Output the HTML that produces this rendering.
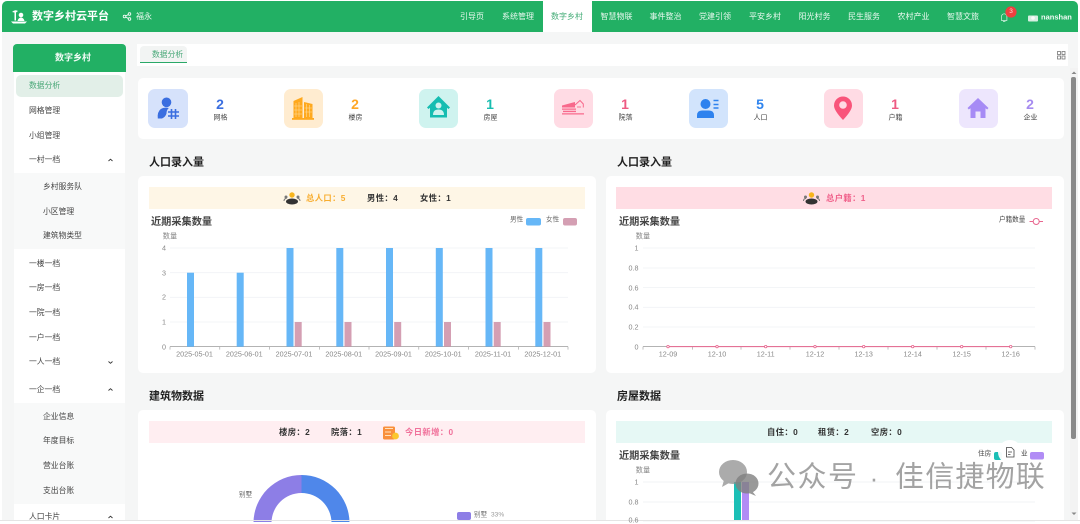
<!DOCTYPE html>
<html lang="zh-CN"><head><meta charset="utf-8"><title>数字乡村云平台</title>
<style>
html,body{margin:0;padding:0;background:#fff}
body{position:relative;width:1080px;height:522px;overflow:hidden;font-family:"Liberation Sans","Noto Sans CJK SC",sans-serif;color:#333;filter:blur(.3px)}
.p{position:absolute}
.c,.l,.r{position:absolute;white-space:nowrap;line-height:1}
.c{transform:translate(-50%,-50%)}
.l{transform:translateY(-50%)}
.r{transform:translate(-100%,-50%)}
.nav{font-size:8px;color:#e9f8ef;top:16.5px}
.side{font-size:7.8px;color:#444;left:29px}
.sub{font-size:7.8px;color:#444;left:43px}
.num{font-size:14px;font-weight:700;top:103.5px}
.lab{font-size:7px;color:#444;top:118px}
.sec{font-size:11px;font-weight:700;color:#222;left:149px}
.cap{font-size:10.2px;font-weight:700;color:#444}
.ban{font-size:8.3px;font-weight:700;color:#333;letter-spacing:.4px}
.ax{font-size:7.2px;color:#888}
.leg{font-size:6.6px;color:#666}
</style></head><body>

<div class="p" style="left:2px;top:1px;width:1076px;height:519px;background:#f5f6f6;border-radius:5px 5px 0 0"></div>
<div class="p" style="left:2px;top:1px;width:1076px;height:31px;background:#22b064;border-radius:5px 5px 0 0"></div>
<div class="p" style="left:543px;top:1px;width:49px;height:31px;background:#fff"></div>

<div class="p" style="left:14px;top:72px;width:111px;height:448px;background:#fff"></div>
<div class="p" style="left:13px;top:44px;width:113px;height:28px;background:#22b064;border-radius:4px 4px 0 0"></div>
<div class="p" style="left:16px;top:75px;width:107px;height:22px;background:#e2efe8;border-radius:5px"></div>
<div class="p" style="left:14px;top:173px;width:111px;height:76px;background:#f8f9f9"></div>
<div class="p" style="left:14px;top:403px;width:111px;height:101px;background:#f8f9f9"></div>

<div class="p" style="left:137px;top:44px;width:931px;height:22px;background:#fff"></div>
<div class="p" style="left:140px;top:46px;width:47px;height:16px;background:#f2f4f3;border-radius:4px 4px 0 0;border-bottom:1px solid #2aa868"></div>

<div class="p" style="left:138px;top:78px;width:926px;height:61px;background:#fff;border-radius:5px"></div>
<div class="p" style="left:138px;top:176px;width:458px;height:197px;background:#fff;border-radius:5px"></div>
<div class="p" style="left:606px;top:176px;width:458px;height:197px;background:#fff;border-radius:5px"></div>
<div class="p" style="left:138px;top:410px;width:458px;height:110px;background:#fff;border-radius:5px 5px 0 0"></div>
<div class="p" style="left:606px;top:410px;width:458px;height:110px;background:#fff;border-radius:5px 5px 0 0"></div>

<div class="p" style="left:149px;top:187px;width:436px;height:22px;background:#fef6e6"></div>
<div class="p" style="left:616px;top:187px;width:436px;height:22px;background:#ffdde4"></div>
<div class="p" style="left:149px;top:421px;width:436px;height:22px;background:#ffeef1"></div>
<div class="p" style="left:616px;top:421px;width:436px;height:22px;background:#e6f8f5"></div>

<div class="p" style="left:1070px;top:68px;width:8px;height:452px;background:#f3f3f3"></div>
<div class="p" style="left:1071px;top:77px;width:5px;height:362px;background:#8a8a8a;border-radius:2px"></div>

<svg class="p" style="left:0;top:0" width="1080" height="522" viewBox="0 0 1080 522">
  <!-- logo -->
  <g fill="#fff">
    <path d="M12 12q3-3 6-1l-2 1.500 0 8h-1.500l0-8z"/>
    <circle cx="21" cy="15" r="2.300"/>
    <path d="M17.500 21q1-3.500 3.500-3.500t3.500 3.500z"/>
    <path d="M11 21.500h16l-2 2h-12z"/>
  </g>
  <!-- share -->
  <g fill="none" stroke="#fff" stroke-width=".8"><circle cx="124.500" cy="16.500" r="1.300"/><circle cx="129.500" cy="14" r="1.300"/><circle cx="129.500" cy="19" r="1.300"/><path d="M125.800 16l2.500-1.500M125.800 17l2.500 1.500"/></g>
  <!-- bell -->
  <path d="M1001.500 20.500v-4a2.700 2.700 0 0 1 5.400 0v4zM1003 21.500h2.400" fill="none" stroke="#d9f2e3" stroke-width=".7"/>
  <circle cx="1011" cy="12" r="5.600" fill="#ef3f3f"/>
  <!-- avatar -->
  <rect x="1028" y="15.500" width="10" height="6" rx="1" fill="#d7efe2"/><circle cx="1033" cy="18" r="1.800" fill="#f7fbf9"/>

  <!-- stat icon boxes -->
  <rect x="148" y="89" width="40" height="39" rx="7" fill="#d6e2fb"/>
  <rect x="284" y="89" width="39" height="39" rx="7" fill="#ffecd0"/>
  <rect x="419" y="89" width="39" height="39" rx="7" fill="#cff3ef"/>
  <rect x="554" y="89" width="39" height="39" rx="7" fill="#ffdbe4"/>
  <rect x="689" y="89" width="39" height="39" rx="7" fill="#d2e4fc"/>
  <rect x="824" y="89" width="39" height="39" rx="7" fill="#ffdbe4"/>
  <rect x="959" y="89" width="39" height="39" rx="7" fill="#ede6fd"/>

  <!-- person # -->
  <circle cx="166.500" cy="102.300" r="4.800" fill="#3a6ee0"/>
  <path d="M157.800 118.500q-.8-6.500 3-9.500 3-2 8-1-2.500 2.500-2.300 5.500-1 3.500-4.500 5z" fill="#3a6ee0"/>
  <path d="M171.500 109v10M175.500 109v10M168 112h11M168 116h11" stroke="#3a6ee0" stroke-width="1.600" fill="none"/>
  <!-- building -->
  <path d="M293.500 118v-17l9-4v21zM304 118v-16l8.500 2v14z" fill="#ffa91e"/>
  <rect x="292" y="118" width="22" height="1.800" fill="#ffa91e"/>
  <path d="M296 103v14M299 102v15M306.500 104v13M309.500 105v12M294 106h8M294 110h8M294 114h8M304.500 108h7.500M304.500 112h7.500" stroke="#ffdc9c" stroke-width=".6"/>
  <!-- teal house -->
  <path d="M438.500 96l11.500 11.500-1.500 1.500-1.500-1.200v9.700h-17v-9.700l-1.500 1.200-1.500-1.500z" fill="#16bdb1"/>
  <circle cx="438.500" cy="105.500" r="3" fill="#cff3ef"/>
  <path d="M433 115q0-5.500 5.500-5.500t5.500 5.500z" fill="#cff3ef"/>
  <!-- barn -->
  <path d="M562 105.500l11-3 2-.5v5.500h-13zM562 108.500h14v1.300h-14zM563 110.800h13v1.300h-13zM562 113.300h22v1.200h-22z" fill="#f8698c"/>
  <path d="M575 105l5-4.500 3.300 3.500v3.500" fill="none" stroke="#f8698c" stroke-width="1"/>
  <path d="M577 107h4" stroke="#f8698c" stroke-width=".9"/>
  <!-- person list -->
  <circle cx="705.500" cy="104" r="5" fill="#2e82ee"/>
  <path d="M697 118v-2.500q0-5 5-5h7q5 0 5 5v2.500z" fill="#2e82ee"/>
  <path d="M713.500 100.500h5M713.500 104.500h5M713.500 108h5" stroke="#2e82ee" stroke-width="1.500"/>
  <!-- pin -->
  <path d="M843 120q-9-9.500-9-14.500a9 9 0 0 1 18 0q0 5-9 14.500z" fill="#f9547a"/>
  <circle cx="843" cy="105" r="3.800" fill="#ffdbe4"/>
  <!-- purple house -->
  <path d="M978 98l10.500 10-1.300 1.500-1.700-1.300v9.800h-5v-6.500h-5v6.500h-5v-9.800l-1.700 1.300-1.300-1.500z" fill="#a68bf5"/>

  <!-- people icons -->
  <g>
    <circle cx="292" cy="195" r="2.700" fill="#f7b51e"/>
    <ellipse cx="292" cy="201.500" rx="6" ry="3" fill="#333"/>
    <circle cx="286" cy="197" r="1.500" fill="#777"/><circle cx="298" cy="197" r="1.500" fill="#777"/>
    <path d="M284 201q0-2.500 2.500-2.500M300 201q0-2.500-2.500-2.500" stroke="#777" fill="none"/>
    <circle cx="811.500" cy="195" r="2.700" fill="#f7b51e"/>
    <ellipse cx="811.500" cy="201.500" rx="6" ry="3" fill="#333"/>
    <circle cx="805.500" cy="197" r="1.500" fill="#777"/><circle cx="817.500" cy="197" r="1.500" fill="#777"/>
    <path d="M803.500 201q0-2.500 2.500-2.500M819.500 201q0-2.500-2.500-2.500" stroke="#777" fill="none"/>
  </g>
  <!-- calendar -->
  <rect x="383" y="426.500" width="12" height="13" rx="1.500" fill="#f98f3c"/>
  <path d="M385 428.500h8M385 432h6M385 435.500h6" stroke="#ffe2bd" stroke-width="1"/>
  <circle cx="395.500" cy="436" r="3.400" fill="#fbc72e"/>

  <!-- tab grid icon -->
  <g fill="none" stroke="#777" stroke-width=".8"><rect x="1057.500" y="51.500" width="3" height="3"/><rect x="1062" y="51.500" width="3" height="3"/><rect x="1057.500" y="56" width="3" height="3"/><rect x="1062" y="56" width="3" height="3"/></g>

  <!-- chevrons -->
  <g fill="none" stroke="#333" stroke-width=".9">
    <path d="M108.500 161l2-1.800 2 1.800M108.500 390.500l2-1.800 2 1.800M108.500 518l2-1.800 2 1.800"/>
    <path d="M108.500 361.500l2 1.800 2-1.800"/>
  </g>

  <!-- left chart grid -->
  <g stroke="#f0f2f5" stroke-width=".8"><path d="M170 248H568M170 272.700H568M170 297.300H568M170 322H568"/></g>
  <path d="M170 346.600H568" stroke="#9a9a9a" stroke-width=".7"/>
  <path d="M170 346.600v3M219.800 346.600v3M269.500 346.600v3M319.300 346.600v3M369 346.600v3M418.800 346.600v3M468.500 346.600v3M518.300 346.600v3M568 346.600v3" stroke="#9a9a9a" stroke-width=".6"/>
  <g fill="#66b7f7">
    <rect x="187" y="272.700" width="7" height="74"/>
    <rect x="236.700" y="272.700" width="7" height="74"/>
    <rect x="286.500" y="248" width="7" height="98.600"/>
    <rect x="336.300" y="248" width="7" height="98.600"/>
    <rect x="386" y="248" width="7" height="98.600"/>
    <rect x="435.800" y="248" width="7" height="98.600"/>
    <rect x="485.500" y="248" width="7" height="98.600"/>
    <rect x="535.300" y="248" width="7" height="98.600"/>
  </g>
  <g fill="#d49fb3">
    <rect x="294.700" y="322" width="7" height="24.600"/>
    <rect x="344.500" y="322" width="7" height="24.600"/>
    <rect x="394.200" y="322" width="7" height="24.600"/>
    <rect x="444" y="322" width="7" height="24.600"/>
    <rect x="493.700" y="322" width="7" height="24.600"/>
    <rect x="543.500" y="322" width="7" height="24.600"/>
  </g>
  <rect x="526" y="218" width="15" height="7.500" rx="2" fill="#66b7f7"/>
  <rect x="563" y="218" width="14" height="7.500" rx="2" fill="#d49fb3"/>

  <!-- right chart grid -->
  <g stroke="#f0f2f5" stroke-width=".8"><path d="M643 248H1035M643 268H1035M643 287.500H1035M643 307.300H1035M643 327H1035"/></g>
  <path d="M643 346.600H1035" stroke="#9a9a9a" stroke-width=".7"/>
  <path d="M643 346.600v3M692.300 346.600v3M741 346.600v3M790 346.600v3M839 346.600v3M888 346.600v3M937 346.600v3M986 346.600v3M1035 346.600v3" stroke="#9a9a9a" stroke-width=".6"/>
  <path d="M668 346.600H1010.700" stroke="#e8668f" stroke-width="1"/>
  <g fill="#fff" stroke="#e8668f" stroke-width=".8">
    <circle cx="668" cy="346.600" r="1.200"/><circle cx="717" cy="346.600" r="1.200"/><circle cx="765.700" cy="346.600" r="1.200"/><circle cx="815" cy="346.600" r="1.200"/><circle cx="863.700" cy="346.600" r="1.200"/><circle cx="912.700" cy="346.600" r="1.200"/><circle cx="961.700" cy="346.600" r="1.200"/><circle cx="1010.700" cy="346.600" r="1.200"/>
  </g>
  <path d="M1029.500 221.500H1043" stroke="#e8668f" stroke-width="1"/>
  <circle cx="1036.200" cy="221.500" r="3" fill="#fff" stroke="#e8668f" stroke-width="1"/>

  <!-- donut -->
  <path d="M301.500 475A48 48 0 0 1 349.500 523H331.500A30 30 0 0 0 301.500 493z" fill="#4f87ea"/>
  <path d="M301.500 475A48 48 0 0 0 253.500 523H271.500A30 30 0 0 1 301.500 493z" fill="#8d7ee6"/>
  <rect x="457" y="512" width="14" height="8" rx="2" fill="#8d7ee6"/>

  <!-- bottom right chart -->
  <g stroke="#eef0f3" stroke-width=".8"><path d="M643 482H1035M643 502H1035M643 521H1035"/></g>
  <rect x="734" y="482" width="7" height="38" fill="#1cbfb6"/>
  <rect x="742" y="482" width="7" height="38" fill="#b18cf5"/>
  <rect x="994" y="452" width="8" height="8" rx="2" fill="#1cbfb6"/>
  <rect x="1030" y="452" width="14" height="7.500" rx="2" fill="#b18cf5"/>

  <!-- scroll arrows -->
  <path d="M1071.500 74l2.500-2.500 2.500 2.500zM1071.500 512.500l2.500 2.500 2.500-2.500z" fill="#888"/>
  <path d="M0 520.500H1080" stroke="#e4e4e4" stroke-width="1"/>

  <!-- floating button -->
  <circle cx="1010" cy="452" r="12" fill="#fff" opacity=".95"/>
  <path d="M1006.500 447.500h5l2.500 2.500v7h-7.500zM1008 452h4M1008 454.500h2.500" fill="none" stroke="#444" stroke-width=".8"/>

  <!-- wechat watermark -->
  <g fill="#8f8f8f" opacity=".75">
    <ellipse cx="733" cy="472" rx="14" ry="12"/><path d="M724 480l-2 7 7-4z"/>
  </g>
  <g fill="#808080" opacity=".8">
    <ellipse cx="747" cy="483.500" rx="11.500" ry="10"/><path d="M752 491l4 5-7-3z"/>
  </g>
</svg>

<!-- header -->
<div class="l" style="left:32px;top:17px;font-size:11px;font-weight:700;color:#fff">数字乡村云平台</div>
<div class="l" style="left:136px;top:17px;font-size:8px;color:#eaf8ef">福永</div>
<div class="c nav" style="left:472px">引导页</div>
<div class="c nav" style="left:518px">系统管理</div>
<div class="c nav" style="left:567px;color:#45ad78">数字乡村</div>
<div class="c nav" style="left:616.500px">智慧物联</div>
<div class="c nav" style="left:665.500px">事件整治</div>
<div class="c nav" style="left:715px">党建引领</div>
<div class="c nav" style="left:765px">平安乡村</div>
<div class="c nav" style="left:814.500px">阳光村务</div>
<div class="c nav" style="left:864px">民生服务</div>
<div class="c nav" style="left:913.500px">农村产业</div>
<div class="c nav" style="left:963px">智慧文旅</div>
<div class="c" style="left:1011px;top:12px;font-size:6.500px;color:#ffd9d9">3</div>
<div class="l" style="left:1041px;top:17px;font-size:7.500px;font-weight:700;color:#f2fbf6">nanshan</div>

<!-- sidebar -->
<div class="c" style="left:73px;top:58px;font-size:9px;font-weight:700;color:#f2fbf6">数字乡村</div>
<div class="l side" style="top:85.500px;color:#4aa878">数据分析</div>
<div class="l side" style="top:110.500px">网格管理</div>
<div class="l side" style="top:135.500px">小组管理</div>
<div class="l side" style="top:160px">一村一档</div>
<div class="l sub" style="top:186.500px">乡村服务队</div>
<div class="l sub" style="top:211.500px">小区管理</div>
<div class="l sub" style="top:236px">建筑物类型</div>
<div class="l side" style="top:263.500px">一楼一档</div>
<div class="l side" style="top:288px">一房一档</div>
<div class="l side" style="top:312.500px">一院一档</div>
<div class="l side" style="top:337.500px">一户一档</div>
<div class="l side" style="top:362px">一人一档</div>
<div class="l side" style="top:389.500px">一企一档</div>
<div class="l sub" style="top:416.500px">企业信息</div>
<div class="l sub" style="top:441px">年度目标</div>
<div class="l sub" style="top:465.500px">营业台账</div>
<div class="l sub" style="top:490.500px">支出台账</div>
<div class="l side" style="top:517px">人口卡片</div>

<!-- tab -->
<div class="l" style="left:152px;top:55px;font-size:7.800px;color:#48a878">数据分析</div>

<!-- stats -->
<div class="c num" style="left:220px;color:#3b6fe0">2</div><div class="c lab" style="left:220.500px">网格</div>
<div class="c num" style="left:355px;color:#ffa726">2</div><div class="c lab" style="left:355.500px">楼房</div>
<div class="c num" style="left:490px;color:#17bdb0">1</div><div class="c lab" style="left:490.500px">房屋</div>
<div class="c num" style="left:625px;color:#ee5a83">1</div><div class="c lab" style="left:625.500px">院落</div>
<div class="c num" style="left:760px;color:#2f84ee">5</div><div class="c lab" style="left:760.500px">人口</div>
<div class="c num" style="left:895px;color:#ee5a83">1</div><div class="c lab" style="left:895.500px">户籍</div>
<div class="c num" style="left:1030px;color:#a68bf0">2</div><div class="c lab" style="left:1030.500px">企业</div>

<!-- section titles -->
<div class="l sec" style="top:162.500px">人口录入量</div>
<div class="l sec" style="left:617px;top:162.500px">人口录入量</div>
<div class="l sec" style="top:396.500px">建筑物数据</div>
<div class="l sec" style="left:617px;top:396.500px">房屋数据</div>

<!-- banners -->
<div class="l ban" style="left:306px;top:198px;color:#f8ad30">总人口：5</div>
<div class="l ban" style="left:367px;top:198px">男性：4</div>
<div class="l ban" style="left:420px;top:198px">女性：1</div>
<div class="l ban" style="left:826px;top:198px;color:#f0608a">总户籍：1</div>
<div class="l ban" style="left:279px;top:432px">楼房：2</div>
<div class="l ban" style="left:331px;top:432px">院落：1</div>
<div class="l ban" style="left:405px;top:432px;color:#f0709a">今日新增：0</div>
<div class="l ban" style="left:767px;top:432px">自住：0</div>
<div class="l ban" style="left:818px;top:432px">租赁：2</div>
<div class="l ban" style="left:871px;top:432px">空房：0</div>

<!-- chart captions -->
<div class="l cap" style="left:151px;top:222.500px">近期采集数量</div>
<div class="l cap" style="left:619px;top:222.500px">近期采集数量</div>
<div class="l cap" style="left:619px;top:456.500px">近期采集数量</div>

<!-- left chart labels -->
<div class="c ax" style="left:170px;top:236px">数量</div>
<div class="r ax" style="left:166px;top:248px">4</div>
<div class="r ax" style="left:166px;top:272.700px">3</div>
<div class="r ax" style="left:166px;top:297.300px">2</div>
<div class="r ax" style="left:166px;top:322px">1</div>
<div class="r ax" style="left:166px;top:346.600px">0</div>
<div class="c ax" style="left:194.500px;top:353.500px">2025-05-01</div>
<div class="c ax" style="left:244.300px;top:353.500px">2025-06-01</div>
<div class="c ax" style="left:294px;top:353.500px">2025-07-01</div>
<div class="c ax" style="left:343.800px;top:353.500px">2025-08-01</div>
<div class="c ax" style="left:393.500px;top:353.500px">2025-09-01</div>
<div class="c ax" style="left:443.300px;top:353.500px">2025-10-01</div>
<div class="c ax" style="left:493px;top:353.500px">2025-11-01</div>
<div class="c ax" style="left:542.800px;top:353.500px">2025-12-01</div>
<div class="l leg" style="left:510px;top:221px">男性</div>
<div class="l leg" style="left:546px;top:221px">女性</div>

<!-- right chart labels -->
<div class="c ax" style="left:643px;top:236px">数量</div>
<div class="r ax" style="left:638.500px;top:248px">1</div>
<div class="r ax" style="left:638.500px;top:268px">0.8</div>
<div class="r ax" style="left:638.500px;top:287.500px">0.6</div>
<div class="r ax" style="left:638.500px;top:307.300px">0.4</div>
<div class="r ax" style="left:638.500px;top:327px">0.2</div>
<div class="r ax" style="left:638.500px;top:346.600px">0</div>
<div class="c ax" style="left:668px;top:353.500px">12-09</div>
<div class="c ax" style="left:717px;top:353.500px">12-10</div>
<div class="c ax" style="left:765.700px;top:353.500px">12-11</div>
<div class="c ax" style="left:815px;top:353.500px">12-12</div>
<div class="c ax" style="left:863.700px;top:353.500px">12-13</div>
<div class="c ax" style="left:912.700px;top:353.500px">12-14</div>
<div class="c ax" style="left:961.700px;top:353.500px">12-15</div>
<div class="c ax" style="left:1010.700px;top:353.500px">12-16</div>
<div class="l leg" style="left:999px;top:221px;color:#444">户籍数量</div>

<!-- bottom labels -->
<div class="l leg" style="left:239px;top:496px;color:#666">别墅</div>
<div class="l leg" style="left:474px;top:515.500px;color:#777">别墅</div>
<div class="l leg" style="left:491px;top:515.500px;color:#999">33%</div>
<div class="c ax" style="left:643px;top:470px">数量</div>
<div class="r ax" style="left:638.500px;top:482px">1</div>
<div class="r ax" style="left:638.500px;top:502px">0.8</div>
<div class="r ax" style="left:638.500px;top:520px">0.6</div>
<div class="l leg" style="left:978px;top:455px;color:#444">住房</div>
<div class="l leg" style="left:1021px;top:455px;color:#444">业</div>

<!-- watermark -->
<div class="l" style="left:767px;top:478px;font-size:29px;letter-spacing:1.500px;color:rgba(140,140,140,.8)">公众号</div>
<div class="c" style="left:874px;top:478px;font-size:26px;color:rgba(140,140,140,.8)">·</div>
<div class="l" style="left:895px;top:478px;font-size:29px;letter-spacing:1.200px;color:rgba(140,140,140,.8)">佳信捷物联</div>
</body></html>
